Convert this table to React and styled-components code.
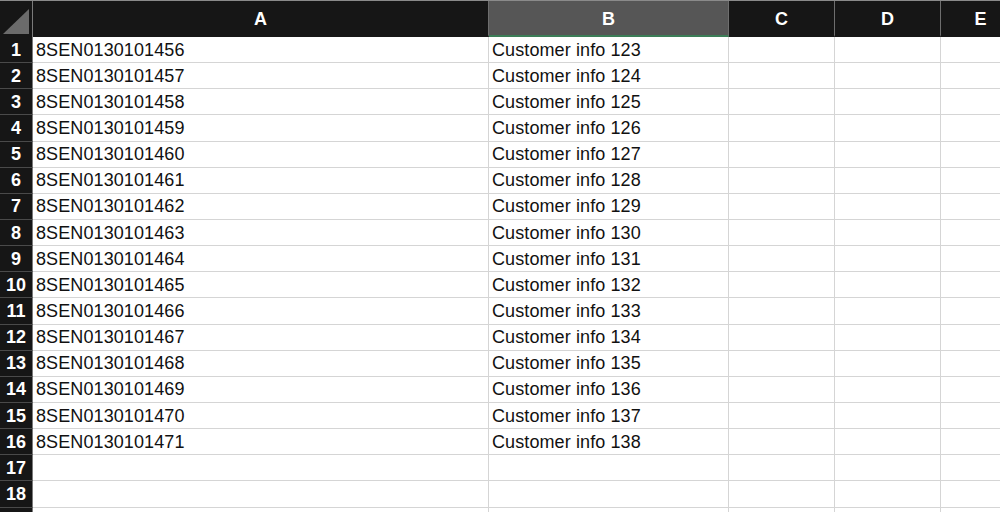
import React from "react";
import styled, { createGlobalStyle } from "styled-components";

const GlobalStyle = createGlobalStyle`
	html, body {
		margin: 0;
		padding: 0;
		background: #ffffff;
		overflow: hidden;
	}
`;

const Sheet = styled.div`
	width: 1000px;
	height: 512px;
	overflow: hidden;
	font-family: "Liberation Sans", Arial, sans-serif;
	border-top: 1px solid #8a8a8a;
	box-sizing: border-box;
`;

const Grid = styled.div`
	display: grid;
	grid-template-columns: 33px 456px 240px 106px 106px 80px;
	grid-template-rows: 36px;
	grid-auto-rows: 26.15px;
`;

const Corner = styled.div`
	background: #161616;
	border-right: 1px solid #7a7a7a;
	box-sizing: border-box;
	display: flex;
	align-items: flex-end;
	justify-content: flex-end;
	padding: 0 3px 3px 0;

	svg {
		display: block;
	}
`;

const ColHead = styled.div`
	background: ${props => (props.$selected ? "#565656" : "#161616")};
	color: #ffffff;
	font-size: 18px;
	font-weight: 700;
	display: flex;
	align-items: center;
	justify-content: center;
	border-right: 1px solid #6e6e6e;
	border-bottom: 2px solid ${props => (props.$selected ? "#3c7d57" : "#161616")};
	box-sizing: border-box;
	padding-top: 2px;
`;

const RowHead = styled.div`
	background: #161616;
	color: #ffffff;
	font-size: 18px;
	font-weight: 700;
	display: flex;
	align-items: center;
	justify-content: center;
	border-right: 1px solid #7a7a7a;
	border-bottom: 1px solid #4a4a4a;
	box-sizing: border-box;
	padding-top: 1px;
`;

const Cell = styled.div`
	background: #ffffff;
	color: #111111;
	font-size: 18px;
	letter-spacing: 0.1px;
	display: flex;
	align-items: center;
	padding: 1px 0 0 3px;
	border-right: 1px solid #d5d5d5;
	border-bottom: 1px solid #d5d5d5;
	box-sizing: border-box;
	white-space: nowrap;
	overflow: hidden;
`;

const columns = ["A", "B", "C", "D", "E"];

const rows = Array.from({ length: 19 }, (_, i) => {
	const n = i + 1;
	if (n > 16) return { n, a: "", b: "" };
	return {
		n,
		a: `8SEN0130101${456 + i}`,
		b: `Customer info ${122 + n}`,
	};
});

const App = () => {
	return (
		<>
			<GlobalStyle />
			<Sheet>
				<Grid>
					<Corner>
						<svg width="26" height="25" viewBox="0 0 26 25">
							<polygon points="0,25 26,0 26,25" fill="#6b6b6b" />
						</svg>
					</Corner>
					{columns.map(c => (
						<ColHead key={c} $selected={c === "B"}>
							{c}
						</ColHead>
					))}

					{rows.map(row => (
						<React.Fragment key={row.n}>
							<RowHead>{row.n}</RowHead>
							<Cell>{row.a}</Cell>
							<Cell>{row.b}</Cell>
							<Cell />
							<Cell />
							<Cell />
						</React.Fragment>
					))}
				</Grid>
			</Sheet>
		</>
	);
};

export default App;
